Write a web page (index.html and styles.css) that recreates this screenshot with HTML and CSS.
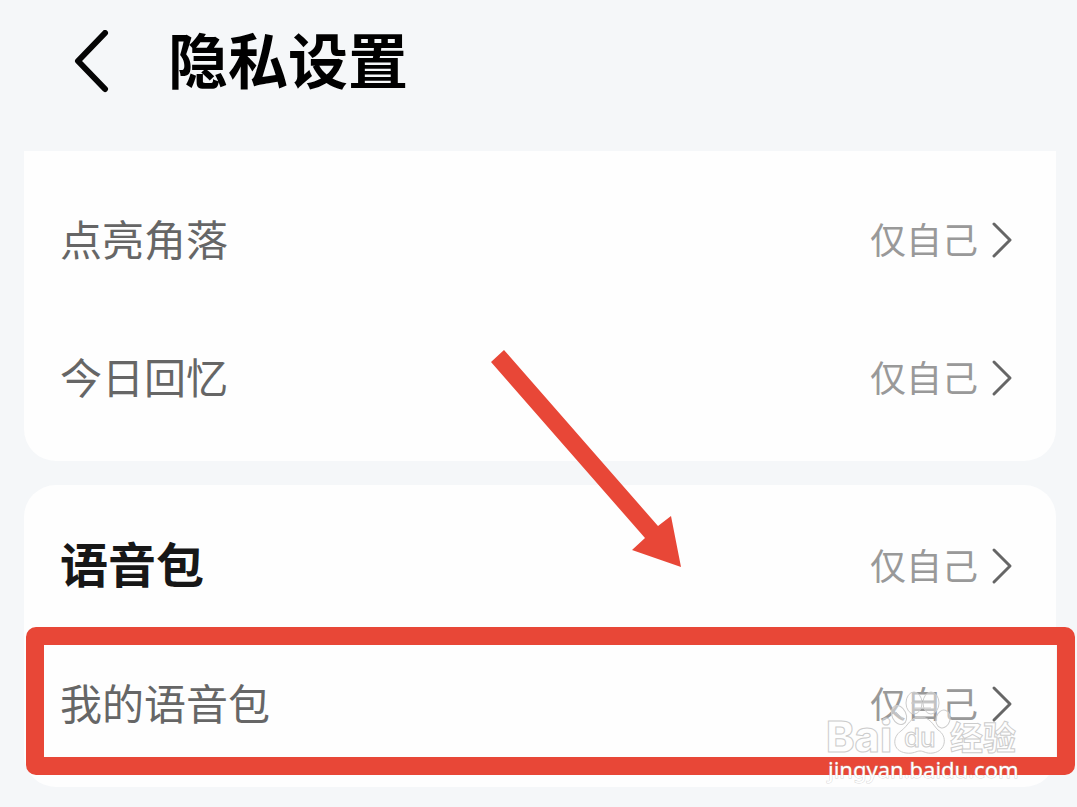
FILE: index.html
```
<!DOCTYPE html>
<html lang="zh-CN">

<head>
  <meta charset="utf-8">
  <meta name="viewport" content="width=device-width">
  <title>隐私设置</title>
  <link rel="stylesheet" href="styles.css">
</head>

<body>

<header class="topbar">
  <button class="back" type="button" aria-label="返回">
    <svg width="38" height="64" viewBox="0 0 38 64"><path d="M33 3 L6 31 L33 59"/></svg>
  </button>
  <h1>隐私设置</h1>
</header>

<main>
  <section class="card card-top">
    <a class="row" href="#corner">
      <span class="label">点亮角落</span>
      <span class="value">仅自己</span>
      <svg class="chevron" width="24" height="40" viewBox="0 0 24 40"><path d="M4 4 L20 20 L4 36"/></svg>
    </a>
    <a class="row" href="#memory">
      <span class="label">今日回忆</span>
      <span class="value">仅自己</span>
      <svg class="chevron" width="24" height="40" viewBox="0 0 24 40"><path d="M4 4 L20 20 L4 36"/></svg>
    </a>
  </section>

  <section class="card">
    <a class="row" href="#voice">
      <strong class="label heading">语音包</strong>
      <span class="value">仅自己</span>
      <svg class="chevron" width="24" height="40" viewBox="0 0 24 40"><path d="M4 4 L20 20 L4 36"/></svg>
    </a>
    <a class="row marked" href="#my-voice">
      <span class="label">我的语音包</span>
      <span class="value">仅自己</span>
      <svg class="chevron" width="24" height="40" viewBox="0 0 24 40"><path d="M4 4 L20 20 L4 36"/></svg>
    </a>

    <!-- arrow pointing at the marked row -->
    <svg class="arrow" width="192" height="220" viewBox="0 0 192 220">
      <path d="M1 13 L14 1 L168 177 L181 167 L191 218 L142 201 L155 189 Z"/>
    </svg>

    <svg class="watermark" width="200" height="100" viewBox="0 0 200 100">
      <g class="logo">
        <text x="4" y="64" class="bai">Bai</text>
        <ellipse cx="77" cy="27" rx="7" ry="10" transform="rotate(-25 77 27)"/>
        <ellipse cx="92" cy="15" rx="8" ry="11"/>
        <ellipse cx="109" cy="15" rx="8" ry="11"/>
        <ellipse cx="121" cy="31" rx="7" ry="9" transform="rotate(15 121 31)"/>
        <path d="M98 29 C108 29 111 37 116 42 C126 48 124 63 111 65 C104 66 102 63 98 63 C94 63 92 66 84 65 C70 63 70 49 79 43 C87 37 88 29 98 29 Z"/>
        <path class="pad" d="M89 15 H112 M92 20 H109 M74 24 L81 31"/>
        <text x="82" y="59" class="du">du</text>
        <text x="128" y="62" class="jingyan">经验</text>
      </g>
      <text x="6" y="90" class="site">jingyan.baidu.com</text>
    </svg>
  </section>
</main>

</body>

</html>
```

FILE: styles.css
```
* {
  box-sizing: border-box;
}

body {
  margin: 0;
  background-color: #f5f7f9;
  font-family: "Noto Sans CJK SC", sans-serif;
}

.topbar {
  display: flex;
  align-items: center;
  gap: 58px;
  height: 151px;
  padding: 0 72px 28px;
}

.back {
  display: flex;
  padding: 0;
  border: 0;
  background: none;
  cursor: pointer;
}

.back path {
  fill: none;
  stroke: #050505;
  stroke-width: 6;
  stroke-linecap: round;
  stroke-linejoin: round;
}

h1 {
  margin: 0;
  padding-bottom: 8px;
  color: #000;
  font-size: 60px;
  font-weight: 700;
  line-height: 88px;
}

main {
  display: flex;
  flex-direction: column;
  gap: 24px;
  padding: 0 21px 20px 24px;
}

.card {
  position: relative;
  padding: 13px 0;
  border-radius: 32px;
  background-color: #fefefe;
}

.card-top {
  padding-top: 21px;
  border-radius: 0 0 32px 32px;
}

.row {
  display: flex;
  align-items: center;
  position: relative;
  height: 138px;
  padding: 0 42px 2px 36px;
  text-decoration: none;
}

.label {
  flex-grow: 1;
  padding-bottom: 4px;
  color: #666;
  font-size: 42px;
  line-height: 60px;
}

.heading {
  padding-bottom: 8px;
  color: #171717;
  font-size: 48px;
  font-weight: 700;
}

.value {
  margin-right: 12px;
  padding-bottom: 4px;
  color: #999;
  font-size: 36px;
  line-height: 52px;
}

.chevron path {
  fill: none;
  stroke: #666;
  stroke-width: 3;
  stroke-linecap: round;
  stroke-linejoin: round;
}

.marked::after {
  content: "";
  position: absolute;
  inset: -9px -19px -1px 2px;
  border: 18px solid #e84737;
  border-radius: 10px;
}

.arrow {
  position: absolute;
  left: 466px;
  top: -136px;
  fill: #e84737;
}

.watermark {
  position: absolute;
  right: 34px;
  bottom: -1px;
}

.logo {
  fill: #fff;
  fill-opacity: 0.4;
  stroke: #ccc;
  stroke-width: 1;
}

.pad {
  fill: none;
}

.bai {
  font: 800 43px Inter, sans-serif;
}

.du {
  font: 500 26px Inter, sans-serif;
}

.jingyan {
  font-size: 33px;
  font-weight: 700;
}

.site {
  fill: #fff;
  stroke: #bbb;
  stroke-opacity: 0.6;
  stroke-width: 1;
  paint-order: stroke;
  font: 22px "Noto Sans", sans-serif;
}
```
